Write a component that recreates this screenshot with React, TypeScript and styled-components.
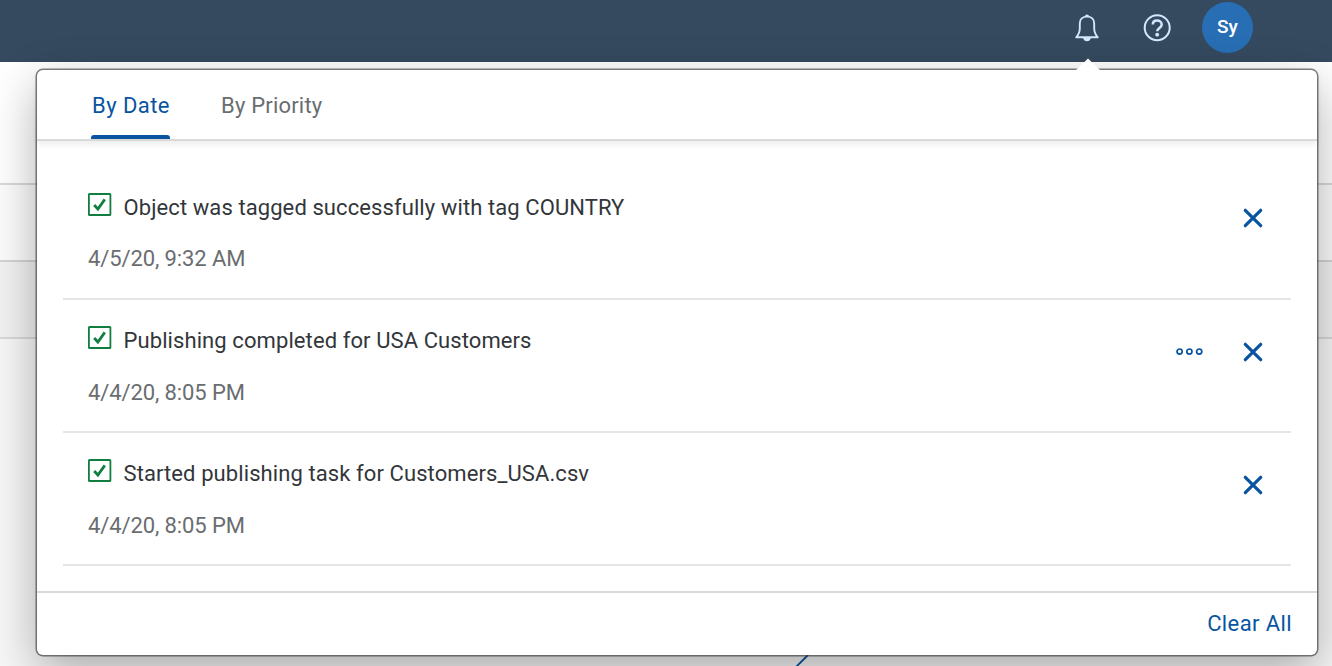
import React from "react";
import styled, { createGlobalStyle } from "styled-components";

const GlobalStyle = createGlobalStyle`
  * { box-sizing: border-box; }
  html, body { margin: 0; padding: 0; overflow: hidden; }
  body { font-family: Roboto, "Noto Sans", sans-serif; font-size: 22px; background: #fff; }
  button { font: inherit; border: 0; padding: 0; background: none; cursor: pointer; }
  svg { display: block; }
`;

const Page = styled.div`
  position: relative;
  display: flex;
  flex-direction: column;
  width: 1332px;
  height: 666px;
  overflow: hidden;
`;

const Shell = styled.header`
  flex: none;
  display: flex;
  justify-content: flex-end;
  align-items: flex-start;
  height: 62px;
  padding: 2px 79px 0 0;
  background: #354a5f;
  position: relative;
`;

const ShellButton = styled.button<{ $gap: number }>`
  width: 28px;
  height: 51px;
  margin-right: ${(p) => p.$gap}px;
  display: flex;
  align-items: center;
  justify-content: center;
`;

const Avatar = styled.div`
  width: 51px;
  height: 51px;
  border-radius: 50%;
  background: #286eb4;
  color: #fff;
  font-size: 19px;
  font-weight: 500;
  line-height: 50px;
  text-align: center;
`;

const Band = styled.div<{ $height: number; $bg: string; $line?: string }>`
  flex: none;
  height: ${(p) => p.$height}px;
  background: ${(p) => p.$bg};
  border-bottom: ${(p) => (p.$line ? `2px solid ${p.$line}` : "0")};
`;

const Canvas = styled.div`
  flex: 1;
  display: flex;
  align-items: flex-end;
  padding-left: 794px;
  background: #f7f7f7;
`;

const Popover = styled.section`
  position: absolute;
  left: 37px;
  top: 70px;
  width: 1280px;
  height: 585px;
  display: flex;
  flex-direction: column;
  background: #fff;
  border-radius: 6px;
  box-shadow: 0 0 0 1.5px rgba(60, 60, 60, 0.65), 0 16px 48px rgba(0, 0, 0, 0.32);
`;

const Pointer = styled.svg`
  position: absolute;
  left: 1039px;
  top: -12px;
`;

const Tabs = styled.nav`
  flex: none;
  display: flex;
  gap: 50px;
  height: 71px;
  padding-left: 54px;
  border-bottom: 2px solid #d9d9d9;
  box-shadow: 0 3px 6px rgba(0, 0, 0, 0.08);
`;

const Tab = styled.button<{ $active?: boolean; $spacing: number }>`
  height: 69px;
  padding-left: 1px;
  display: flex;
  color: ${(p) => (p.$active ? "#0854a0" : "#6a6d70")};
  letter-spacing: ${(p) => p.$spacing}px;
  line-height: 72px;
  white-space: nowrap;
  position: relative;
  &::after {
    content: "";
    display: ${(p) => (p.$active ? "block" : "none")};
    position: absolute;
    left: 0;
    bottom: 0;
    width: 79px;
    height: 4px;
    border-radius: 3px 3px 0 0;
    background: #0854a0;
  }
`;

const List = styled.ul`
  flex: 1;
  margin: 0;
  padding: 26px 26px 0;
  list-style: none;
`;

const Item = styled.li`
  display: flex;
  justify-content: space-between;
  height: 133px;
  padding: 25px 28px 0 25px;
  border-bottom: 2px solid #e5e5e5;
`;

const Title = styled.div`
  display: flex;
  gap: 11.5px;
  height: 30px;
  color: #32363a;
  line-height: 31px;
  letter-spacing: 0.09px;
  white-space: nowrap;
`;

const When = styled.div<{ $offset: number }>`
  margin-top: ${(p) => p.$offset}px;
  color: #6a6d70;
  line-height: 31px;
  letter-spacing: -0.1px;
`;

const Actions = styled.div<{ $height: number }>`
  display: flex;
  align-items: center;
  gap: 39px;
  height: ${(p) => p.$height}px;
`;

const Footer = styled.footer`
  flex: none;
  display: flex;
  justify-content: flex-end;
  align-items: center;
  height: 64px;
  padding: 0 25px 0 0;
  border-top: 2px solid #d9d9d9;
`;

const ClearAll = styled.button`
  color: #0854a0;
  letter-spacing: 0.4px;
  line-height: 30px;
`;

const Success = () => (
  <svg width="24" height="24" viewBox="0 0 24 24" fill="none">
    <rect x="0.9" y="2" width="21.5" height="21" rx="0.6" stroke="#107e3e" strokeWidth="1.8" />
    <path d="M6.2 13l3.7 4L16.8 7.4" stroke="#107e3e" strokeWidth="2.7" />
  </svg>
);

const Close = () => (
  <svg width="20" height="20" viewBox="0 0 20 20" fill="none">
    <path d="M2.3 2.3l15.4 15.4M17.7 2.3L2.3 17.7" stroke="#0854a0" strokeWidth="3.2" strokeLinecap="round" />
  </svg>
);

const More = () => (
  <svg width="28" height="10" viewBox="0 0 28 10" fill="none" stroke="#0854a0" strokeWidth="1.7">
    <circle cx="3.6" cy="4.6" r="2.6" />
    <circle cx="13.4" cy="4.6" r="2.6" />
    <circle cx="23.2" cy="4.6" r="2.6" />
  </svg>
);

const Bell = () => (
  <svg width="26" height="30" viewBox="0 0 26 30" fill="none">
    <path
      d="M13 3.6C8.6 3.6 5.8 6.4 5.8 10.4v4.800c0 4.200-1.400 6.600-3.600 9.100h21.600c-2.200-2.500-3.600-4.900-3.600-9.100v-4.800c0-4-2.800-6.800-7.200-6.800z"
      stroke="#d1e8ff"
      strokeWidth="1.9"
      strokeLinejoin="round"
    />
    <path d="M10.900 3.6a2.100 2.100 0 0 1 4.200 0zM9 25h8c-.6 2-2 3.300-4 3.300S9.600 27 9 25z" fill="#d1e8ff" />
  </svg>
);

const Help = () => (
  <svg width="28" height="28" viewBox="0 0 28 28" fill="none" stroke="#d1e8ff">
    <circle cx="14.200" cy="13.700" r="12.500" strokeWidth="2" />
    <path d="M9.800 10.600c0-2.500 1.800-4 4.300-4s4.600 1.500 4.600 3.900c0 3.500-4.500 3.300-4.500 6.800" strokeWidth="2.500" />
    <circle cx="14.200" cy="20.700" r="1.900" fill="#d1e8ff" stroke="none" />
  </svg>
);

const notifications = [
  { title: "Object was tagged successfully with tag COUNTRY", when: "4/5/20, 9:32 AM", more: false, actions: 52, offset: 21 },
  { title: "Publishing completed for USA Customers", when: "4/4/20, 8:05 PM", more: true, actions: 54, offset: 22 },
  { title: "Started publishing task for Customers_USA.csv", when: "4/4/20, 8:05 PM", more: false, actions: 54, offset: 22 },
];

export default function App() {
  return (
    <Page>
      <GlobalStyle />
      <Shell>
        <ShellButton $gap={42} aria-label="Notifications"><Bell /></ShellButton>
        <ShellButton $gap={31} aria-label="Help"><Help /></ShellButton>
        <Avatar>Sy</Avatar>
      </Shell>
      <Band $height={123} $bg="#fff" $line="#d9d9d9" />
      <Band $height={77} $bg="#fcfcfc" $line="#d4d4d4" />
      <Band $height={77} $bg="#f2f2f2" $line="#d9d9d9" />
      <Canvas>
        <svg width="16" height="12" viewBox="0 0 16 12">
          <path d="M2 13L14 1" stroke="#0854a0" strokeWidth="1.8" />
        </svg>
      </Canvas>
      <Popover>
        <Pointer width="24" height="13" viewBox="0 0 24 13">
          <path d="M0 13V12L12 0.5L24 12V13z" fill="#fff" />
        </Pointer>
        <Tabs>
          <Tab $active $spacing={0.45}>By Date</Tab>
          <Tab $spacing={0.2}>By Priority</Tab>
        </Tabs>
        <List>
          {notifications.map((n) => (
            <Item key={n.title}>
              <div>
                <Title><Success /><span>{n.title}</span></Title>
                <When $offset={n.offset}>{n.when}</When>
              </div>
              <Actions $height={n.actions}>
                {n.more && <More />}
                <Close />
              </Actions>
            </Item>
          ))}
        </List>
        <Footer><ClearAll>Clear All</ClearAll></Footer>
      </Popover>
    </Page>
  );
}
